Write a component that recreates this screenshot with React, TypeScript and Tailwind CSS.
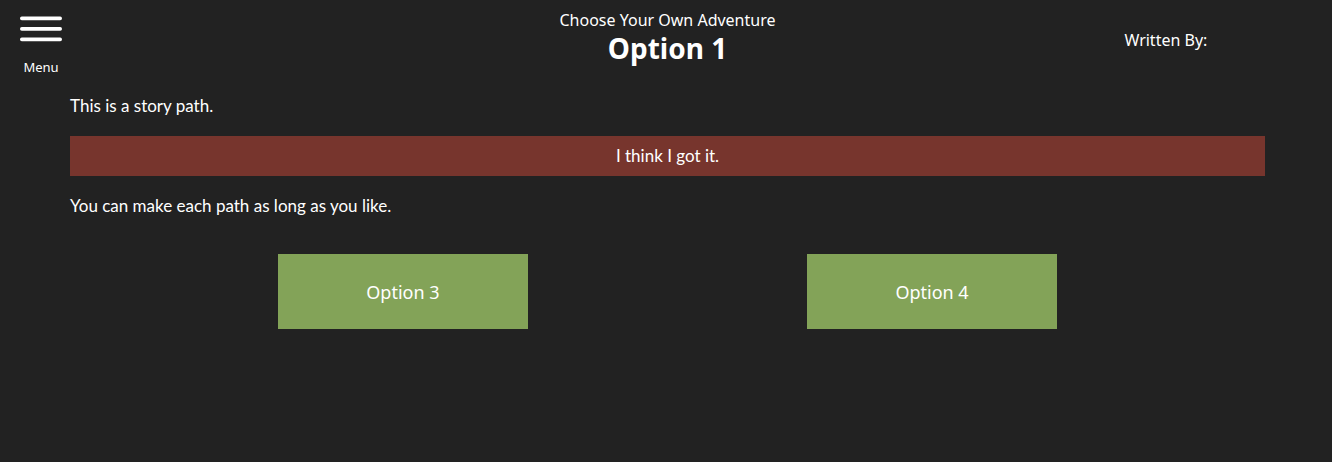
const options = ["Option 3", "Option 4"];

function Menu() {
  return (
    <button
      type="button"
      className="flex w-[42px] cursor-pointer flex-col items-center gap-[15px] text-[13px] leading-5"
    >
      <svg viewBox="0 0 42 26" className="h-[26px] w-[42px]" fill="currentColor" aria-hidden="true">
        <rect x="0" y="0.6" width="42" height="3.6" rx="1.8" />
        <rect x="0" y="11.1" width="42" height="3.6" rx="1.8" />
        <rect x="0" y="21.6" width="42" height="3.6" rx="1.8" />
      </svg>
      Menu
    </button>
  );
}

export default function App() {
  return (
    <div className="min-h-screen bg-[#222222] pl-[3px] font-['Noto_Sans',sans-serif] text-base leading-6 text-white">
      <header className="grid grid-cols-[1fr_2fr_1fr]">
        <div className="pt-4 pl-[17px]">
          <Menu />
        </div>
        <div className="pt-2 text-center">
          <p>Choose Your Own Adventure</p>
          <h1 className="text-[28px] leading-8 font-bold">Option 1</h1>
        </div>
        <p className="pt-7 text-center">Written By:</p>
      </header>
      <main className="pt-[17px]">
        <div className="flex flex-col gap-[18px] px-[67px] font-['Lato','Noto_Sans',sans-serif] text-[17px] leading-6">
          <p>This is a story path.</p>
          <button type="button" className="h-10 w-full cursor-pointer bg-[#77352d]">
            I think I got it.
          </button>
          <p>You can make each path as long as you like.</p>
        </div>
        <div className="flex flex-wrap justify-center gap-x-[21%] gap-y-6 pt-9">
          {options.map((option) => (
            <button
              key={option}
              type="button"
              className="h-[75px] w-[250px] cursor-pointer bg-[#83a358] text-lg"
            >
              {option}
            </button>
          ))}
        </div>
      </main>
    </div>
  );
}
